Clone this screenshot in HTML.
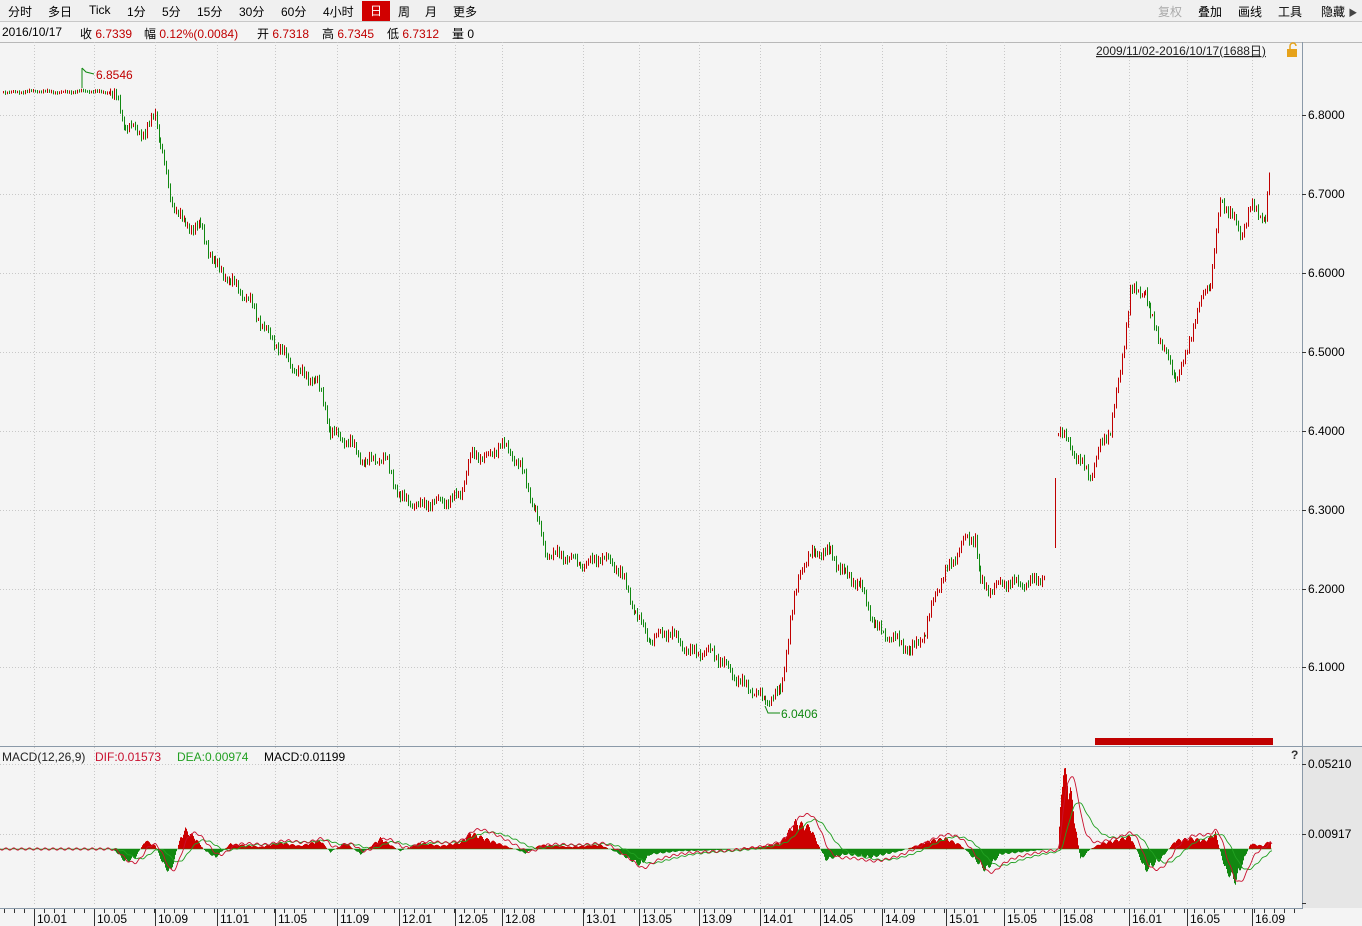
<!DOCTYPE html>
<html><head><meta charset="utf-8"><style>
body{margin:0;width:1362px;height:926px;overflow:hidden;background:#f4f4f4;font-family:"Liberation Sans","Noto Sans CJK SC",sans-serif;font-size:12px;}
.tb{position:absolute;top:0;left:0;width:1362px;height:21px;background:#f0f0f0;border-bottom:1px solid #c8c8c8}
.tb span{position:absolute;top:3px;color:#000}
.ib{position:absolute;top:22px;left:0;width:1362px;height:20px;border-bottom:1px solid #b8b8b8}
.ib span{position:absolute;top:3px}
.r{color:#c00000}
</style></head><body>
<div class="tb">
<span style="left:8px">分时</span><span style="left:48px">多日</span><span style="left:89px">Tick</span><span style="left:127px">1分</span><span style="left:162px">5分</span><span style="left:197px">15分</span><span style="left:239px">30分</span><span style="left:281px">60分</span><span style="left:323px">4小时</span>
<span style="left:362px;top:1px;width:28px;height:20px;background:#d10000;color:#fff;text-align:center;line-height:20px">日</span>
<span style="left:398px">周</span><span style="left:425px">月</span><span style="left:453px">更多</span>
<span style="left:1158px;color:#aaa">复权</span><span style="left:1198px">叠加</span><span style="left:1238px">画线</span><span style="left:1278px">工具</span><span style="left:1321px">隐藏 <span style="position:static;font-size:9px;color:#444">▶</span></span>
</div>
<div class="ib">
<span style="left:2px">2016/10/17</span><span style="left:80px">收 <b class="r" style="font-weight:normal">6.7339</b></span><span style="left:144px">幅 <b class="r" style="font-weight:normal">0.12%(0.0084)</b></span><span style="left:257px">开 <b class="r" style="font-weight:normal">6.7318</b></span><span style="left:322px">高 <b class="r" style="font-weight:normal">6.7345</b></span><span style="left:387px">低 <b class="r" style="font-weight:normal">6.7312</b></span><span style="left:452px">量 0</span>
</div>
<svg id="s" width="1362" height="926" style="position:absolute;left:0;top:0" font-family="Liberation Sans, sans-serif" font-size="12"></svg>
<script>
var s=document.getElementById('s'),h='';
h+='<rect x="1303" y="747" width="59" height="161" fill="#e6e6e6"/>';
h+='<line x1="1302.5" y1="42" x2="1302.5" y2="908" stroke="#8a99a8"/>';
h+='<line x1="0" y1="746.5" x2="1362" y2="746.5" stroke="#8a99a8"/>';
h+='<line x1="0" y1="908.5" x2="1303" y2="908.5" stroke="#8a99a8"/>';
var gx=[34,94,155,217,275,337,399,455,502,583,639,699,760,820,882,946,1004,1060,1129,1187,1252];
var lb=['10.01','10.05','10.09','11.01','11.05','11.09','12.01','12.05','12.08','13.01','13.05','13.09','14.01','14.05','14.09','15.01','15.05','15.08','16.01','16.05','16.09'];
gx.forEach(function(x,i){h+='<line x1="'+(x+.5)+'" y1="42" x2="'+(x+.5)+'" y2="906" stroke="#c8c8c8" stroke-dasharray="1,2"/>';
h+='<line x1="'+(x+.5)+'" y1="909" x2="'+(x+.5)+'" y2="926" stroke="#333"/>';
h+='<text x="'+(x+3)+'" y="923" fill="#000">'+lb[i]+'</text>';});
for(var x=4;x<1300;x+=10)h+='<line x1="'+(x+.5)+'" y1="909" x2="'+(x+.5)+'" y2="913" stroke="#333"/>';
var py=[115,194,273,352,431,510,589,667],pl=['6.8000','6.7000','6.6000','6.5000','6.4000','6.3000','6.2000','6.1000'];
py.forEach(function(y,i){h+='<line x1="0" y1="'+(y+.5)+'" x2="1302" y2="'+(y+.5)+'" stroke="#c8c8c8" stroke-dasharray="1,2"/><line x1="1302" y1="'+(y+.5)+'" x2="1306" y2="'+(y+.5)+'" stroke="#333"/><text x="1308" y="'+(y+4)+'">'+pl[i]+'</text>';});
[[764,'0.05210'],[834,'0.00917']].forEach(function(a){h+='<line x1="0" y1="'+(a[0]+.5)+'" x2="1302" y2="'+(a[0]+.5)+'" stroke="#c8c8c8" stroke-dasharray="1,2"/><line x1="1302" y1="'+(a[0]+.5)+'" x2="1306" y2="'+(a[0]+.5)+'" stroke="#333"/><text x="1308" y="'+(a[0]+4)+'">'+a[1]+'</text>';});
h+='<line x1="1302" y1="903.5" x2="1306" y2="903.5" stroke="#333"/>';
var P=[[3,92],[110,92],[118,100],[125,130],[145,135],[155,108],[160,140],[170,200],[185,230],[200,225],[215,265],[230,285],[250,300],[270,340],[290,365],[315,380],[325,410],[330,435],[350,440],[365,465],[385,460],[400,495],[420,510],[440,500],[460,495],[470,460],[490,455],[500,440],[520,470],[535,510],[545,550],[565,560],[580,565],[600,555],[620,575],[635,610],[650,640],[670,635],[690,650],[710,655],[730,670],[750,690],[765,705],[780,690],[790,620],[800,570],[815,555],[830,550],[845,575],[860,590],[875,625],[895,640],[910,655],[925,630],[935,590],[945,575],[955,560],[965,540],[975,535],[980,580],[990,590],[1010,585],[1030,580],[1045,578]];
var P2=[[1058,430],[1070,445],[1080,460],[1090,478],[1100,450],[1110,430],[1120,370],[1130,290],[1145,295],[1150,320],[1160,340],[1175,375],[1185,360],[1195,320],[1210,280],[1220,200],[1230,210],[1240,240],[1250,210],[1265,215],[1270,165]];
function ex(A){var r=[];for(var i=0;i<A.length-1;i++){var a=A[i],b=A[i+1];for(var x=a[0];x<b[0];x+=2){var t=(x-a[0])/(b[0]-a[0]);var y=a[1]+(b[1]-a[1])*t;var amp=(x<110)?0.2:1;r.push([x,y+amp*(Math.sin(x*1.7)*3+Math.sin(x*.37)*4+Math.sin(x*.13)*3)]);}}return r;}
function cand(A){var r=ex(A);r.forEach(function(p,i){var pr=i>0?r[i-1][1]:p[1];var c=p[1]<=pr?'#c00000':'#118811';var amp=(p[0]<110)?0.3:1;var hh=1+amp*Math.abs(Math.sin(p[0]*.9))*3;var y1=Math.min(p[1],pr)-hh,y2=Math.max(p[1],pr)+hh*.7;h+='<line x1="'+p[0]+'.5" y1="'+y1.toFixed(1)+'" x2="'+p[0]+'.5" y2="'+y2.toFixed(1)+'" stroke="'+c+'"/>';});}
cand(P);cand(P2);
h+='<line x1="1055.5" y1="478" x2="1055.5" y2="548" stroke="#c00000"/>';
h+='<line x1="82" y1="68" x2="82" y2="88" stroke="#118811"/><polyline points="82,68 86,72 94,74" fill="none" stroke="#118811"/><text x="96" y="79" fill="#c00000">6.8546</text>';
h+='<polyline points="765,706 768,713 780,713" fill="none" stroke="#118811"/><text x="781" y="718" fill="#118811">6.0406</text>';
h+='<rect x="1095" y="738" width="178" height="7" fill="#c00000"/>';
h+='<text x="1096" y="55" fill="#222" text-decoration="underline">2009/11/02-2016/10/17(1688日)</text><rect x="1287" y="49" width="10" height="8" fill="#e6a21a"/><path d="M1290 49v-3a3 3 0 0 1 6 0" fill="none" stroke="#e6a21a" stroke-width="1.5"/>';
h+='<text x="2" y="761" fill="#222">MACD(12,26,9)</text><text x="95" y="761" fill="#c8102e">DIF:0.01573</text><text x="177" y="761" fill="#22a022">DEA:0.00974</text><text x="264" y="761" fill="#000">MACD:0.01199</text><text x="1291" y="759" font-weight="bold" fill="#333">?</text>';
var Z=849,dif=[],dea=[];
var H=[[0,0],[110,0],[115,2],[125,12],[135,8],[145,-8],[155,-3],[163,15],[170,22],[180,-10],[185,-18],[195,-10],[205,2],[215,8],[230,-5],[260,-2],[280,-6],[300,-3],[320,-8],[330,3],[345,-6],[360,5],[380,-10],[400,2],[420,-6],[440,-3],[460,-6],[470,-15],[490,-8],[505,-3],[525,4],[540,-4],[570,-2],[600,-4],[620,5],[640,15],[650,5],[680,2],[720,1],[760,-2],[780,-6],[795,-25],[810,-20],[825,10],[845,5],[870,8],[900,2],[930,-8],[945,-10],[960,-4],[985,20],[1000,5],[1040,1],[1058,0],[1062,-75],[1070,-55],[1080,10],[1090,0],[1100,-5],[1115,-8],[1130,-12],[1145,20],[1160,10],[1175,-8],[1190,-10],[1205,-8],[1215,-15],[1225,20],[1235,30],[1250,-5],[1262,-3],[1270,-8]];
function hv(x){for(var i=0;i<H.length-1;i++)if(x>=H[i][0]&&x<=H[i+1][0]){var t=(x-H[i][0])/(H[i+1][0]-H[i][0]);return H[i][1]+(H[i+1][1]-H[i][1])*t;}return 0;}
var d=0,e=0;
for(var x=0;x<=1272;x++){var v=hv(x)*(0.8+0.4*Math.abs(Math.sin(x*.5)));if(Math.abs(v)>0.5)h+='<line x1="'+x+'.5" y1="'+Z+'" x2="'+x+'.5" y2="'+(Z+v).toFixed(1)+'" stroke="'+(v<0?'#cc0000':'#118811')+'"/>';
d+=(hv(x)*1.6-d)*0.1; e+=(d-e)*0.08; var n=Math.sin(x*.8)*1.2; var yd=Math.max(764,Math.min(903,Z+d*1.05+n)),ye=Math.max(770,Math.min(903,Z+e*1.05+n*.6)); dif.push(x+','+yd.toFixed(1)); dea.push(x+','+ye.toFixed(1));}
h+='<line x1="0" y1="'+Z+'" x2="1272" y2="'+Z+'" stroke="#118811" stroke-width=".6"/>';
h+='<polyline points="'+dea.join(' ')+'" fill="none" stroke="#22a022" stroke-width=".9"/><polyline points="'+dif.join(' ')+'" fill="none" stroke="#c8102e" stroke-width=".9"/>';
s.innerHTML=h;
</script>
</body></html>
